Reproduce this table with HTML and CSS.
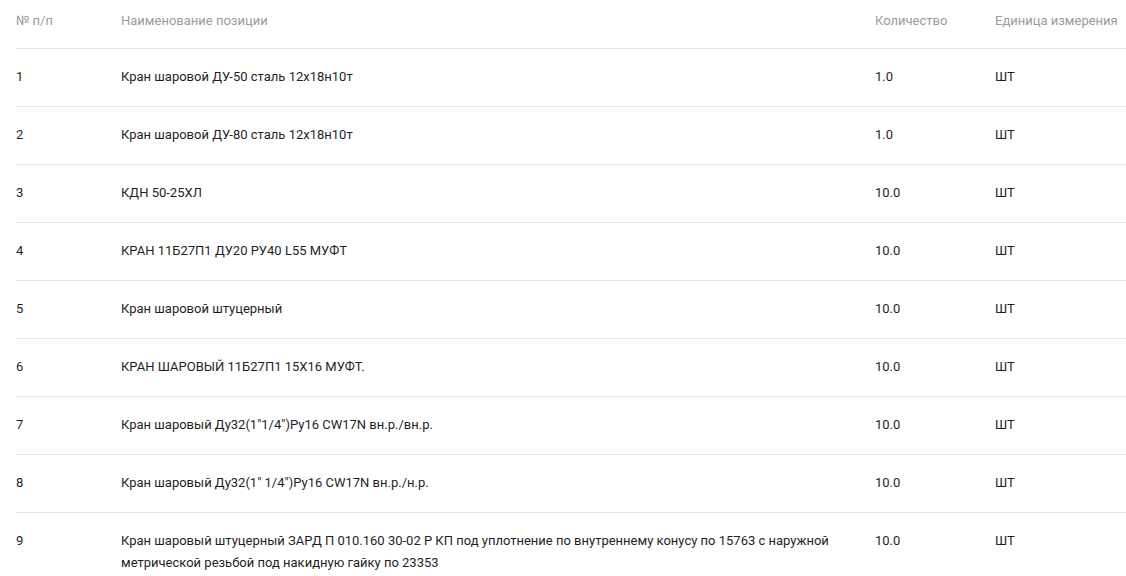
FILE: index.html
```html
<!DOCTYPE html>
<html lang="ru">
<head>
<meta charset="utf-8">
<link rel="stylesheet" href="styles.css">
</head>
<body>
<div class="wrap">
<table class="items">
  <colgroup>
    <col class="c-num"><col class="c-name"><col class="c-qty"><col class="c-unit">
  </colgroup>
  <thead>
    <tr><th>№ п/п</th><th>Наименование позиции</th><th>Количество</th><th>Единица измерения</th></tr>
  </thead>
  <tbody>
    <tr><td>1</td><td>Кран шаровой ДУ-50 сталь 12х18н10т</td><td>1.0</td><td>ШТ</td></tr>
    <tr><td>2</td><td>Кран шаровой ДУ-80 сталь 12х18н10т</td><td>1.0</td><td>ШТ</td></tr>
    <tr><td>3</td><td>КДН 50-25ХЛ</td><td>10.0</td><td>ШТ</td></tr>
    <tr><td>4</td><td>КРАН 11Б27П1 ДУ20 РУ40 L55 МУФТ</td><td>10.0</td><td>ШТ</td></tr>
    <tr><td>5</td><td>Кран шаровой штуцерный</td><td>10.0</td><td>ШТ</td></tr>
    <tr><td>6</td><td>КРАН ШАРОВЫЙ 11Б27П1 15Х16 МУФТ.</td><td>10.0</td><td>ШТ</td></tr>
    <tr><td>7</td><td>Кран шаровый Ду32(1"1/4")Ру16 CW17N вн.р./вн.р.</td><td>10.0</td><td>ШТ</td></tr>
    <tr><td>8</td><td>Кран шаровый Ду32(1" 1/4")Ру16 CW17N вн.р./н.р.</td><td>10.0</td><td>ШТ</td></tr>
    <tr><td>9</td><td>Кран шаровый штуцерный ЗАРД П 010.160 30-02 Р КП под уплотнение по внутреннему конусу по 15763 с наружной метрической резьбой под накидную гайку по 23353</td><td>10.0</td><td>ШТ</td></tr>
  </tbody>
</table>
</div>
</body>
</html>
```

FILE: styles.css
```css
html, body {
  margin: 0;
  padding: 0;
  background: #ffffff;
  overflow: hidden;
}
body {
  font-family: Roboto, "Liberation Sans", sans-serif;
  font-size: 13px;
  color: #1f1f1f;
}
.wrap {
  padding-left: 16px;
}
.items {
  width: 1110px;
  border-collapse: collapse;
  table-layout: fixed;
}
.c-num { width: 105px; }
.c-name { width: 754px; }
.c-qty { width: 120px; }
.c-unit { width: auto; }
.items th {
  text-align: left;
  font-weight: 400;
  color: #9b9b9b;
  line-height: 22px;
  padding: 10px 24px 16px 0;
  border-bottom: 1px solid #e4e8ee;
  white-space: nowrap;
}
.items td {
  text-align: left;
  vertical-align: top;
  line-height: 22px;
  padding: 17px 24px 18px 0;
  border-bottom: 1px solid #e4e8ee;
}
```
